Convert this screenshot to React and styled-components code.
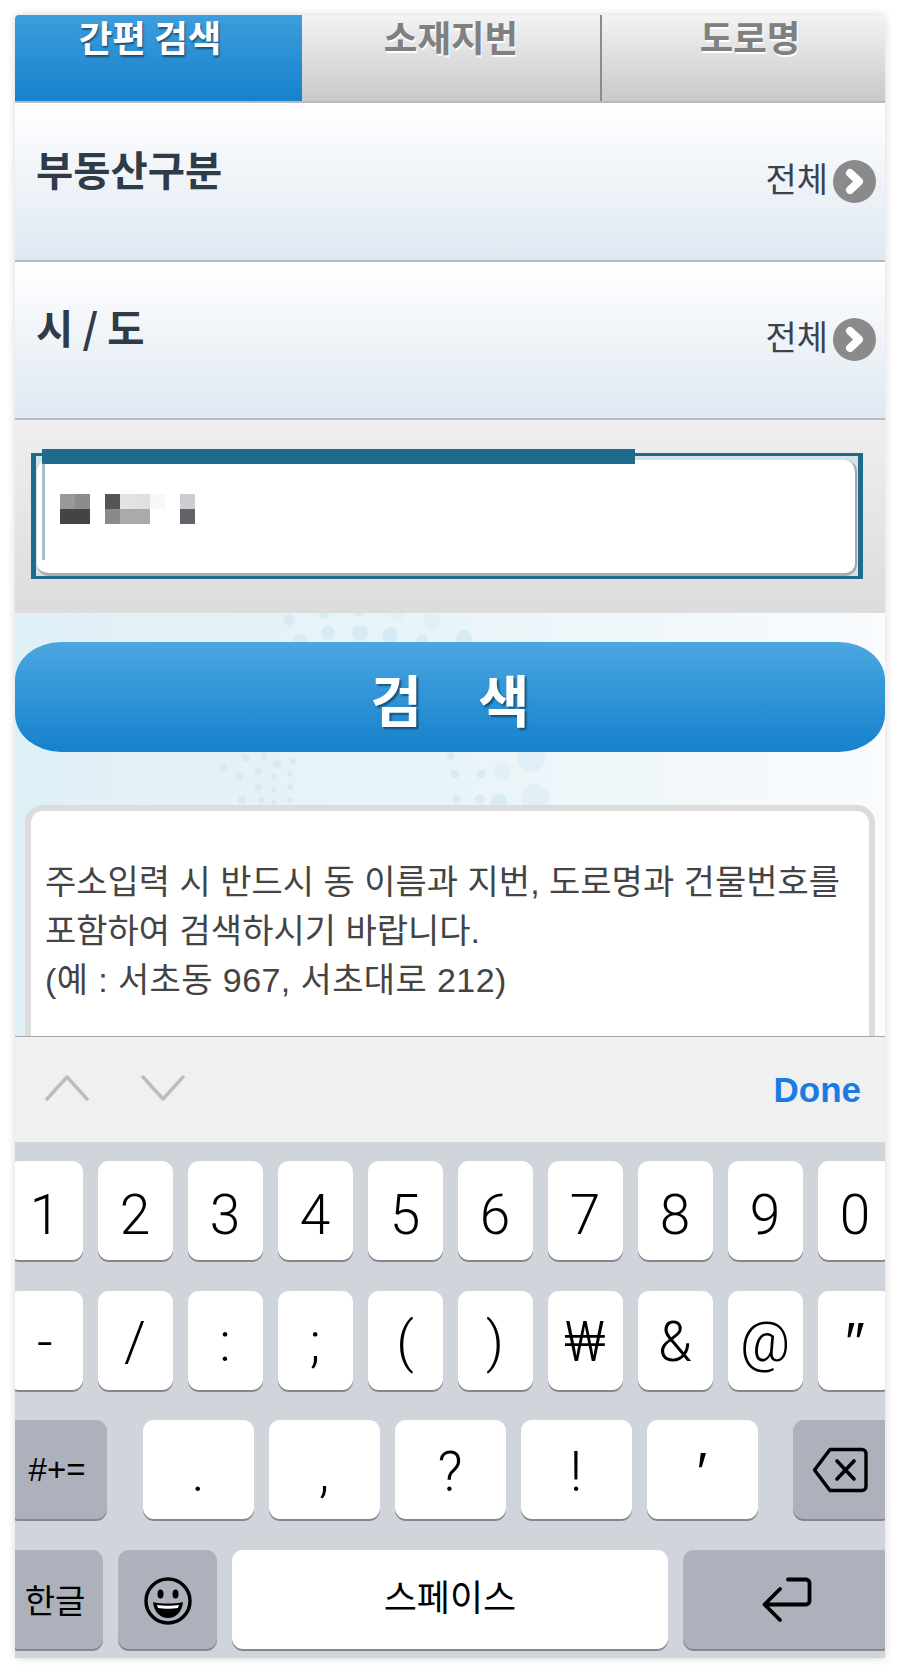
import React from 'react'
import styled, { createGlobalStyle } from 'styled-components'

const Global = createGlobalStyle`
  html, body { margin: 0; padding: 0; background: #fff; }
  body { font-family: "Liberation Sans", "Noto Sans CJK KR", sans-serif; }
`

const Page = styled.div`
  padding: 15px;
  height: 1673px;
  box-sizing: border-box;
`

const Frame = styled.div`
  width: 870px;
  height: 1643px;
  display: flex;
  flex-direction: column;
  border-radius: 4px 4px 0 0;
  box-shadow: 0 0 9px rgba(0, 0, 0, 0.16);
`

const Tabs = styled.div`
  display: flex;
  height: 86px;
  border-bottom: 2px solid #b9b9b9;
  flex: none;
`

const Tab = styled.div`
  box-sizing: border-box;
  width: ${p => p.$w}px;
  padding: 0 ${p => p.$pr || 0}px 0 ${p => p.$pl || 0}px;
  text-align: center;
  font-family: "Noto Sans CJK KR", sans-serif;
  font-weight: 700;
  font-size: 36.5px;
  line-height: 44px;
  color: ${p => (p.$active ? '#fff' : '#808080')};
  text-shadow: ${p => (p.$active ? '1px 2px 2px rgba(0,0,0,.45)' : '1px 2px 1px #fff')};
  background: ${p =>
    p.$active
      ? 'linear-gradient(180deg, #3e9ddc 0%, #1681cd 100%)'
      : 'linear-gradient(180deg, #f3f3f3 0%, #c9c9c9 100%)'};
  border-right: ${p => (p.$divider ? '2px solid #8b8b8b' : 'none')};

  &:first-child { border-top-left-radius: 4px; }
  &:last-child { border-top-right-radius: 4px; }
`

const SelectRow = styled.div`
  flex: none;
  box-sizing: border-box;
  height: 158.5px;
  display: flex;
  align-items: center;
  justify-content: space-between;
  padding: 0 9px 0 21px;
  background: linear-gradient(180deg, #ffffff 0%, #dfe8f2 100%);
  border-bottom: 2px solid #b7bcc3;
`

const RowLabel = styled.div`
  font-family: "Noto Sans CJK KR", sans-serif;
  font-weight: 700;
  font-size: 40.5px;
  color: #2f3b47;
  margin-bottom: 26px;
`

const RowValue = styled.div`
  display: flex;
  align-items: center;
  gap: 5px;
  font-family: "Noto Sans CJK KR", sans-serif;
  font-size: 34px;
  color: #38434f;
`

const ValueText = styled.span`
  margin-bottom: 8px;
`

const InputPanel = styled.div`
  flex: none;
  box-sizing: border-box;
  height: 193px;
  padding: 33px 22px 0 16px;
  background: linear-gradient(180deg, #efefef 0%, #dcdcdc 100%);
`

const FocusBox = styled.div`
  position: relative;
  box-sizing: border-box;
  height: 126px;
  border: solid #1f6b8c;
  border-width: 3px 5px;
  background: #d5e3e8;
  padding: 4px 1px 0 1px;
`

const FocusBar = styled.div`
  position: absolute;
  z-index: 1;
  left: 6px;
  top: -7px;
  width: 593px;
  height: 15px;
  background: #1f6b8c;
`

const InputField = styled.div`
  position: relative;
  box-sizing: border-box;
  height: 100%;
  background: #fff;
  border-radius: 12px;
  border-right: 2px solid #a5a5a5;
  border-bottom: 3px solid #acacac;
  padding: 34px 0 0 23px;

  &::before {
    content: '';
    position: absolute;
    left: 5px;
    top: 0;
    width: 3px;
    height: 100px;
    background: #a9bdc6;
  }
`

const Mosaic = styled.div`
  display: grid;
  grid-template-columns: repeat(9, 15px);
  grid-auto-rows: 15px;
`

const Pixel = styled.div`
  background: ${p => p.$c};
`

const SearchBand = styled.div`
  flex: none;
  position: relative;
  box-sizing: border-box;
  height: 423px;
  padding-top: 29px;
  overflow: hidden;
  background: linear-gradient(90deg, #dff0f6 0%, #e9f4f8 50%, #f9fbfd 100%);
`

const Dots = styled.svg`
  position: absolute;
  left: 0;
  top: 0;
  width: 870px;
  height: 423px;
`

const SearchButton = styled.div`
  position: relative;
  height: 110px;
  border-radius: 46px / 38px;
  display: flex;
  align-items: center;
  justify-content: center;
  gap: 56px;
  color: #fff;
  font-family: "Noto Sans CJK KR", sans-serif;
  font-weight: 700;
  font-size: 56px;
  text-shadow: 2px 2px 2px rgba(0, 0, 0, 0.45);
  background: linear-gradient(180deg, #4ba7e0 0%, #1681cd 100%);
`

const NoticeCard = styled.div`
  position: relative;
  box-sizing: border-box;
  margin: 53px 10px 0;
  height: 300px;
  padding: 47px 14px 0;
  background: #fff;
  border: 6px solid #dcdcdc;
  border-radius: 18px;
  font-family: "Liberation Sans", "Noto Sans CJK KR", sans-serif;
  font-size: 34px;
  line-height: 49px;
  color: #444;
  white-space: nowrap;
`

const NoticeExample = styled.span`
  letter-spacing: 0.4px;
`

const Toolbar = styled.div`
  flex: none;
  box-sizing: border-box;
  height: 106px;
  display: flex;
  align-items: center;
  padding: 0 24px 0 30px;
  gap: 52px;
  background: #eff0f2;
  border-top: 1px solid #a9a9a9;
`

const ChevronWrap = styled.div`
  display: flex;
  margin-bottom: 4px;
`

const DoneButton = styled.div`
  margin-left: auto;
  font-size: 35px;
  font-weight: 700;
  color: #1b7be2;
`

const Keyboard = styled.div`
  flex: 1;
  display: flex;
  flex-direction: column;
  gap: 28.5px;
  padding-top: 19px;
  background: #d0d4db;
  overflow: hidden;
`

const KeyRow = styled.div`
  display: flex;
  height: 101px;
  flex: none;
  gap: ${p => p.$gap ?? 15}px;
  justify-content: ${p => p.$justify || 'flex-start'};
  margin: 0 ${p => p.$mr ?? 0}px 0 ${p => p.$ml ?? 0}px;
`

const KeyGroup = styled.div`
  display: flex;
  gap: 15px;
`

const Key = styled.div`
  box-sizing: border-box;
  flex: none;
  width: ${p => p.$w}px;
  height: 99px;
  display: flex;
  align-items: center;
  justify-content: center;
  padding: ${p => p.$pad || '4px 0 0'};
  border-radius: 11px;
  background: ${p => (p.$dark ? '#acb1bc' : '#fff')};
  box-shadow: 0 2px 0 #85878c;
  color: #000;
  font-family: ${p => (p.$latin ? '"Liberation Sans"' : 'Roboto, "Liberation Sans"')}, sans-serif;
  font-size: ${p => p.$size || 55}px;
  font-weight: ${p => (p.$latin ? 400 : 300)};
  line-height: 1;
`

const KoreanLabel = styled.span`
  font-family: "Noto Sans CJK KR", sans-serif;
  font-size: ${p => p.$size}px;
  font-weight: 400;
  color: #000;
`

const mosaic = [
  '#999999', '#8c8c8c', null, '#555555', '#e3e3e3', '#e0e0e0', '#f8f8f8', null, '#cfcbd2',
  '#444444', '#444444', null, '#8a8a8a', '#aaaaaa', '#aaaaaa', null, null, '#65616a',
]

const dots = [
  [289, 620, 5.5], [328, 633, 7], [360, 633, 8], [390, 635, 8], [432, 623, 9], [324, 614, 5],
  [359, 612, 5], [396, 612, 9], [300, 640, 6], [464, 638, 8], [422, 641, 6],
  [246, 758, 4], [264, 756, 4], [293, 761, 3], [223, 767, 4], [277, 764, 4], [258, 771, 4],
  [290, 774, 3], [239, 777, 4], [274, 777, 3], [258, 787, 4], [290, 787, 3], [274, 790, 3],
  [242, 800, 4], [261, 800, 3], [274, 803, 3], [290, 800, 3],
  [531, 758, 14], [451, 756, 4], [502, 771, 9], [481, 774, 4], [455, 774, 4], [535, 798, 14],
  [499, 802, 8], [480, 799, 5], [457, 799, 4],
]

const digits = ['1', '2', '3', '4', '5', '6', '7', '8', '9', '0']
const symbols = ['-', '/', ':', ';', '(', ')', '₩', '&', '@', '″']
const punctuation = ['.', ',', '?', '!', '′']
// Roboto has no primes, the fallback draws them straight
const primes = ['″', '′']

function ArrowBadge() {
  return (
    <svg width="43" height="43" viewBox="0 0 43 43">
      <circle cx="21.5" cy="21.5" r="21.5" fill="#8a8a8a" />
      <path d="M17 13l9 8.5-9 8.5" fill="none" stroke="#fff" strokeWidth="8" strokeLinecap="round" strokeLinejoin="round" />
    </svg>
  )
}

function Chevron({ up }) {
  return (
    <svg width="44" height="26" viewBox="0 0 44 26">
      <path
        d={up ? 'M2 24L22 2l20 22' : 'M2 2l20 22L42 2'}
        fill="none"
        stroke="#bcbdbf"
        strokeWidth="3.5"
        strokeLinecap="round"
        strokeLinejoin="round"
      />
    </svg>
  )
}

function DeleteIcon() {
  return (
    <svg width="56" height="46" viewBox="0 0 56 46">
      <path
        d="M18 2.5h32a4 4 0 0 1 4 4v33a4 4 0 0 1-4 4H18L2.5 23z"
        fill="none"
        stroke="#000"
        strokeWidth="3.4"
        strokeLinejoin="round"
      />
      <path d="M25 14l17 18M42 14L25 32" fill="none" stroke="#000" strokeWidth="3.6" strokeLinecap="round" />
    </svg>
  )
}

function ReturnIcon() {
  return (
    <svg width="50" height="45" viewBox="0 0 50 45">
      <path
        d="M26 2.5h18a3.5 3.5 0 0 1 3.5 3.5v18a3.5 3.5 0 0 1-3.5 3.5H3M18 12L2.5 27.5 18 43"
        fill="none"
        stroke="#000"
        strokeWidth="3.8"
        strokeLinecap="round"
        strokeLinejoin="round"
      />
    </svg>
  )
}

function SmileIcon() {
  return (
    <svg width="48" height="48" viewBox="0 0 48 48">
      <circle cx="24" cy="24" r="22" fill="none" stroke="#000" strokeWidth="3.5" />
      <ellipse cx="16.5" cy="17" rx="3" ry="4.5" />
      <ellipse cx="31.5" cy="17" rx="3" ry="4.5" />
      <path d="M9 25c6 2 24 2 30 0-1 10-7 16-15 16S10 35 9 25z" fill="#000" />
      <path d="M13 28c6 1 16 1 22 0l-1 3c-6 1-14 1-20 0z" fill="#fff" />
    </svg>
  )
}

export default function App() {
  return (
    <Page>
      <Global />
      <Frame>
        <Tabs>
          <Tab $active $w={287} $pr={17}>간편 검색</Tab>
          <Tab $w={300} $divider>소재지번</Tab>
          <Tab $w={283} $pl={13}>도로명</Tab>
        </Tabs>

        <SelectRow>
          <RowLabel>부동산구분</RowLabel>
          <RowValue><ValueText>전체</ValueText><ArrowBadge /></RowValue>
        </SelectRow>
        <SelectRow>
          <RowLabel>시 / 도</RowLabel>
          <RowValue><ValueText>전체</ValueText><ArrowBadge /></RowValue>
        </SelectRow>

        <InputPanel>
          <FocusBox>
            <FocusBar />
            <InputField>
              <Mosaic>
                {mosaic.map((c, i) => (
                  <Pixel key={i} $c={c || 'transparent'} />
                ))}
              </Mosaic>
            </InputField>
          </FocusBox>
        </InputPanel>

        <SearchBand>
          <Dots viewBox="15 613 870 423">
            {dots.map(([cx, cy, r], i) => (
              <circle key={i} cx={cx} cy={cy} r={r} fill={r >= 9 ? '#e0f0f6' : '#d6ebf3'} />
            ))}
          </Dots>
          <SearchButton>
            <span>검</span>
            <span>색</span>
          </SearchButton>
          <NoticeCard>
            주소입력 시 반드시 동 이름과 지번, 도로명과 건물번호를
            <br />
            포함하여 검색하시기 바랍니다.
            <br />
            <NoticeExample>(예 : 서초동 967, 서초대로 212)</NoticeExample>
          </NoticeCard>
        </SearchBand>

        <Toolbar>
          <ChevronWrap><Chevron up /></ChevronWrap>
          <ChevronWrap><Chevron /></ChevronWrap>
          <DoneButton>Done</DoneButton>
        </Toolbar>

        <Keyboard>
          <KeyRow $ml={-7.5}>
            {digits.map(k => (
              <Key key={k} $w={75} $pad="10px 0 0">{k}</Key>
            ))}
          </KeyRow>
          <KeyRow $ml={-7.5}>
            {symbols.map(k => (
              <Key key={k} $w={75} $latin={primes.includes(k)}>{k}</Key>
            ))}
          </KeyRow>
          <KeyRow $ml={-8} $mr={-8} $gap={0} $justify="space-between">
            <Key $w={100} $dark $latin $size={33} $pad="0">#+=</Key>
            <KeyGroup>
              {punctuation.map(k => (
                <Key key={k} $w={111} $pad="6px 0 0" $latin={primes.includes(k)}>{k}</Key>
              ))}
            </KeyGroup>
            <Key $w={100} $dark $pad="0 6px 0 0"><DeleteIcon /></Key>
          </KeyRow>
          <KeyRow $ml={-8}>
            <Key $w={96} $dark $pad="0"><KoreanLabel $size={33}>한글</KoreanLabel></Key>
            <Key $w={99} $dark $pad="3px 0 0"><SmileIcon /></Key>
            <Key $w={436} $pad="0 0 8px"><KoreanLabel $size={36}>스페이스</KoreanLabel></Key>
            <Key $w={210} $dark $pad="0 3px 0 0"><ReturnIcon /></Key>
          </KeyRow>
        </Keyboard>
      </Frame>
    </Page>
  )
}
